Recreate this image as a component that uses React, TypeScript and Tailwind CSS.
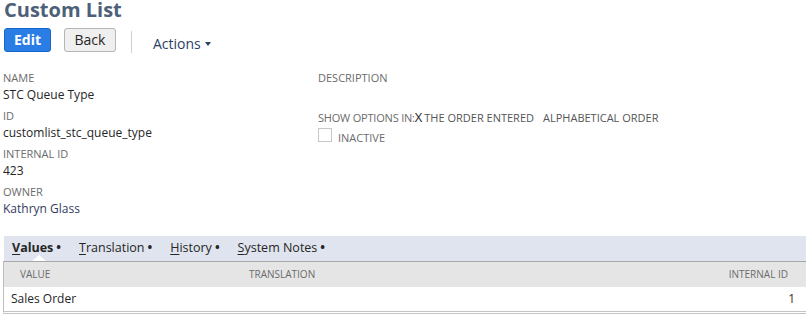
const font = { fontFamily: '"Open Sans", "Liberation Sans", sans-serif' }

function Field({ label, value, valueClass = 'text-[#262626]' }: { label: string; value: string; valueClass?: string }) {
  return (
    <div className="flex flex-col">
      <span className="text-[11px] leading-[16px] text-[#6b6b6b] uppercase">{label}</span>
      <span className={`text-[12px] leading-[18px] ${valueClass}`}>{value}</span>
    </div>
  )
}

function Tab({ label, active = false }: { label: string; active?: boolean }) {
  const first = label.charAt(0)
  const rest = label.slice(1)
  return (
    <div className="relative flex items-center h-full">
      <span className={`text-[12.5px] text-[#262626] ${active ? 'font-bold' : ''}`}>
        <span className="underline underline-offset-2">{first}</span>
        {rest}
        <span className="ml-[3px] font-bold">•</span>
      </span>
      {active && (
        <span className="absolute bottom-0 left-[20px] w-0 h-0 border-l-[7px] border-r-[7px] border-b-[6px] border-l-transparent border-r-transparent border-b-white" />
      )}
    </div>
  )
}

export default function App() {
  return (
    <div className="w-[806px] h-[322px] bg-white overflow-hidden" style={font}>
      <h1 className="text-[20px] leading-[20px] font-bold text-[#4d5f79] pl-[4px]">Custom List</h1>

      <div className="flex items-center h-[24px] mt-[8px] pl-[4px]">
        <button className="w-[47px] h-[24px] rounded-[3px] bg-[#2b7de6] border border-[#1467c9] text-white text-[14px] font-bold leading-none">
          Edit
        </button>
        <button className="ml-[13px] w-[52px] h-[24px] rounded-[3px] bg-[#efefef] border border-[#b5b5b5] text-[#262626] text-[14px] leading-none">
          Back
        </button>
        <div className="ml-[15px] w-px h-[22px] mt-[3px] bg-[#cfcfcf]" />
        <div className="ml-[21px] mt-[6px] flex items-center text-[14px] text-[#2a3f66]">
          Actions
          <span className="ml-[4px] mt-[2px] w-0 h-0 border-l-[3px] border-r-[3px] border-t-[4px] border-l-transparent border-r-transparent border-t-[#2a3f66]" />
        </div>
      </div>

      <div className="flex mt-[18px]">
        <div className="w-[318px] pl-[3px] flex flex-col gap-[4px]">
          <Field label="Name" value="STC Queue Type" />
          <Field label="ID" value="customlist_stc_queue_type" />
          <Field label="Internal ID" value="423" />
          <Field label="Owner" value="Kathryn Glass" valueClass="text-[#333b5e]" />
        </div>
        <div className="flex flex-col">
          <span className="text-[11px] leading-[16px] text-[#6b6b6b]">DESCRIPTION</span>
          <div className="mt-[23px] flex items-baseline text-[11px] leading-[16px] text-[#6b6b6b]">
            <span className="tracking-[-0.2px]">SHOW OPTIONS IN:</span>
            <span className="text-[13px] text-[#262626] leading-[16px]">X</span>
            <span className="ml-[2px] text-[#555]">THE ORDER ENTERED</span>
            <span className="ml-[9px] text-[#555]">ALPHABETICAL ORDER</span>
          </div>
          <div className="flex items-start mt-[2px]">
            <span className="w-[14px] h-[14px] border border-[#c8c8c8] bg-white" />
            <span className="ml-[6px] text-[11px] leading-[16px] text-[#6b6b6b] mt-[2px]">INACTIVE</span>
          </div>
        </div>
      </div>

      <div className="mt-[18px] ml-[4px] h-[25px] bg-[#dfe4ee] flex items-center gap-[18px] pl-[8px]">
        <Tab label="Values" active />
        <Tab label="Translation" />
        <Tab label="History" />
        <Tab label="System Notes" />
      </div>

      <div className="ml-[3px] border-l border-[#bdbdbd] border-t border-t-[#a8a8a8] border-b-[3px] border-b-[#c4c4c4] border-double">
        <div className="h-[25px] bg-[#e5e5e5] flex items-center text-[10px] text-[#6b6b6b] uppercase">
          <span className="ml-[16px] w-[229px]">Value</span>
          <span>Translation</span>
          <span className="ml-auto mr-[18px]">Internal ID</span>
        </div>
        <div className="h-[24px] bg-white flex items-center text-[12px] text-[#262626]">
          <span className="ml-[7px]">Sales Order</span>
          <span className="ml-auto mr-[11px] text-[#4a2a20]">1</span>
        </div>
      </div>
    </div>
  )
}
